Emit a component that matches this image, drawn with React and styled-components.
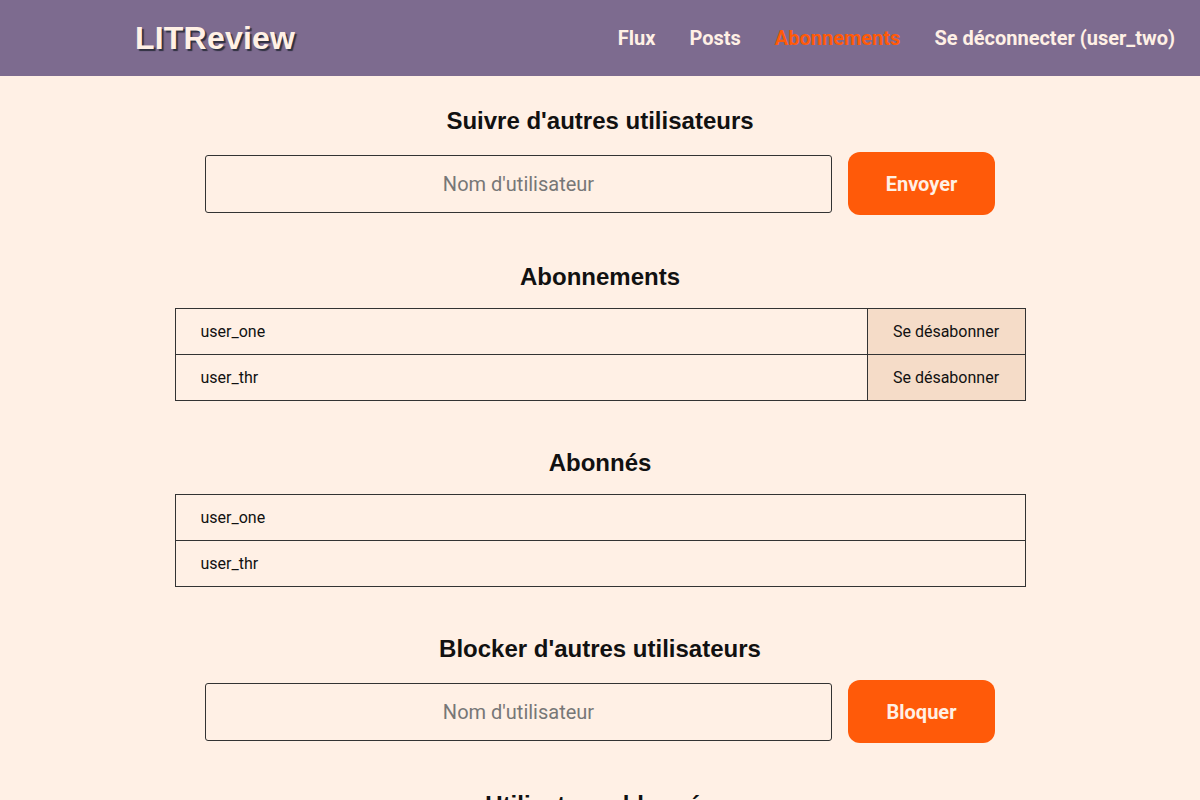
import styled, { createGlobalStyle } from "styled-components";

const GlobalStyle = createGlobalStyle`
  body {
    margin: 0;
    background-color: #fff0e5;
    font-family: Roboto, "Liberation Sans", sans-serif;
  }
`;

const following = ["user_one", "user_thr"];
const followers = ["user_one", "user_thr"];

function App() {
  return (
    <>
      <GlobalStyle />
      <Header>
        <Logo>LITReview</Logo>
        <Nav>
          <NavLink>Flux</NavLink>
          <NavLink>Posts</NavLink>
          <NavLink $active>Abonnements</NavLink>
          <NavLink>Se déconnecter (user_two)</NavLink>
        </Nav>
      </Header>
      <Main>
        <Section>
          <Title>Suivre d'autres utilisateurs</Title>
          <FormRow>
            <UserInput placeholder="Nom d'utilisateur" />
            <SubmitButton>Envoyer</SubmitButton>
          </FormRow>
        </Section>

        <Section>
          <Title>Abonnements</Title>
          <Table>
            <tbody>
              {following.map((name) => (
                <tr key={name}>
                  <NameCell>{name}</NameCell>
                  <ActionCell>Se désabonner</ActionCell>
                </tr>
              ))}
            </tbody>
          </Table>
        </Section>

        <Section>
          <Title>Abonnés</Title>
          <Table>
            <tbody>
              {followers.map((name) => (
                <tr key={name}>
                  <NameCell>{name}</NameCell>
                </tr>
              ))}
            </tbody>
          </Table>
        </Section>

        <Section>
          <Title>Blocker d'autres utilisateurs</Title>
          <FormRow>
            <UserInput placeholder="Nom d'utilisateur" />
            <SubmitButton>Bloquer</SubmitButton>
          </FormRow>
        </Section>

        <Section>
          <Title>Utilisateurs bloqués</Title>
        </Section>
      </Main>
    </>
  );
}

export default App;

const Header = styled.header`
  height: 76px;
  background-color: #7d6b8f;
  display: flex;
  align-items: center;
  justify-content: space-between;
  padding: 0 25px 0 135px;
`;
const Logo = styled.div`
  font-family: "Liberation Sans", Arial, sans-serif;
  font-weight: bold;
  font-size: 32px;
  letter-spacing: 0.2px;
  color: #fff0e5;
  text-shadow: 2px 2px 1px #2f3040;
`;
const Nav = styled.nav`
  display: flex;
  gap: 34px;
`;
const NavLink = styled.a`
  font-family: Roboto, sans-serif;
  font-weight: bold;
  font-size: 20px;
  color: ${(p) => (p.$active ? "#ff5a09" : "#fff0e5")};
  cursor: pointer;
`;
const Main = styled.main`
  display: flex;
  flex-direction: column;
  align-items: center;
  padding-top: 31px;
  gap: 48px;
`;
const Section = styled.section`
  display: flex;
  flex-direction: column;
  align-items: center;
  gap: 17px;
  width: 850px;
`;
const Title = styled.h2`
  margin: 0;
  font-family: "Liberation Sans", Arial, sans-serif;
  font-weight: bold;
  font-size: 24px;
  line-height: 28px;
  color: #111;
`;
const FormRow = styled.div`
  display: flex;
  align-items: center;
  gap: 16px;
`;
const UserInput = styled.input`
  box-sizing: border-box;
  width: 627px;
  height: 58px;
  border: 1px solid #333;
  border-radius: 3px;
  background: transparent;
  font-family: Roboto, sans-serif;
  font-size: 20px;
  text-align: center;
  &::placeholder {
    color: #777;
  }
`;
const SubmitButton = styled.button`
  width: 147px;
  height: 63px;
  border: none;
  border-radius: 12px;
  background-color: #ff5a09;
  color: #fff0e5;
  font-family: Roboto, sans-serif;
  font-weight: bold;
  font-size: 20px;
  cursor: pointer;
`;
const Table = styled.table`
  width: 851px;
  border-collapse: collapse;
  border: 1px solid #333;
  & tr {
    height: 46px;
  }
`;
const NameCell = styled.td`
  border: 1px solid #333;
  padding: 0 25px;
  font-size: 16px;
  color: #111;
`;
const ActionCell = styled.td`
  border: 1px solid #333;
  padding: 0 25px;
  width: 107px;
  background-color: #f5dcc8;
  font-size: 16px;
  color: #111;
  text-align: center;
  white-space: nowrap;
  cursor: pointer;
`;
